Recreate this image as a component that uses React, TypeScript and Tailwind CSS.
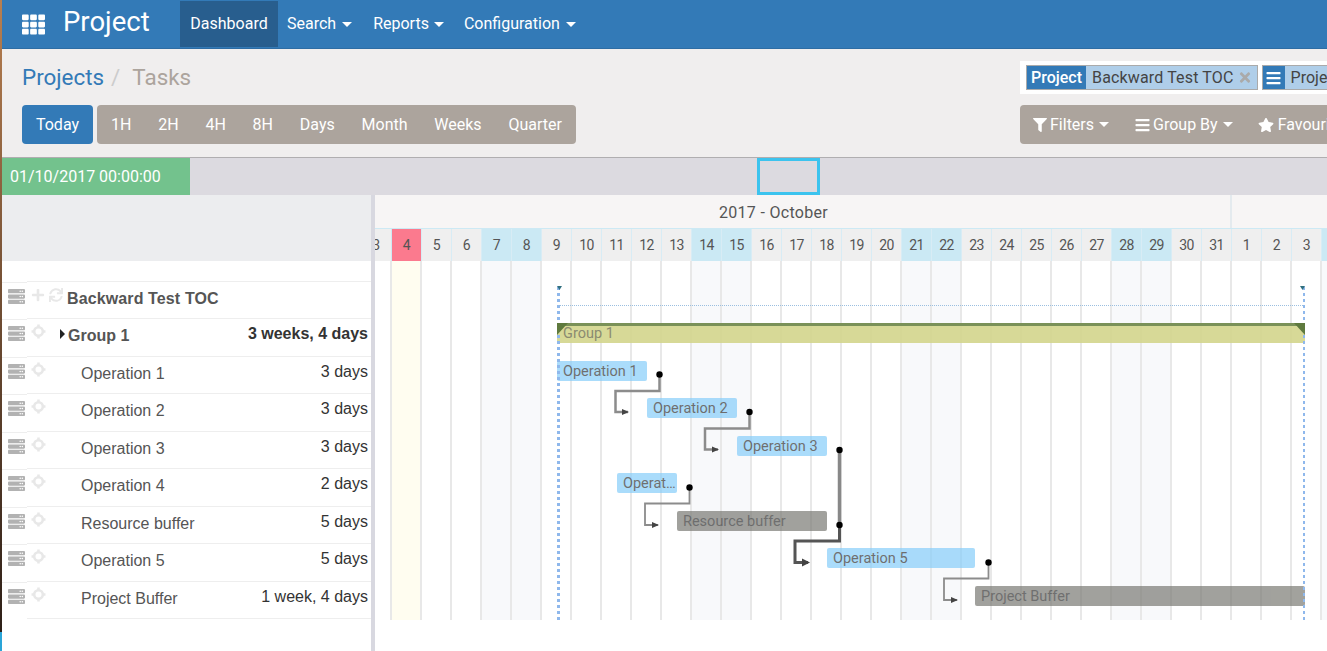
import { FaTh, FaFilter, FaBars, FaStar, FaTimes, FaServer, FaPlus, FaSync } from "react-icons/fa";

const Caret = () => (
  <span className="inline-block h-0 w-0 border-x-[5px] border-t-[5px] border-x-transparent border-t-white" />
);

// FA4-looking target icon used on every task row
const Target = () => (
  <svg viewBox="0 0 14 14" className="ml-[4px] mt-[5px] h-[15px] w-[15px] shrink-0 text-[#e8e8e8]" fill="none" stroke="currentColor">
    <circle cx="7" cy="7" r="4" strokeWidth="2.4" />
    <path d="M7 0.5V3.5M7 10.5V13.5M0.5 7H3.5M10.5 7H13.5" strokeWidth="2.4" />
  </svg>
);

const scales = ["1H", "2H", "4H", "8H", "Days", "Month", "Weeks", "Quarter"];

const days = [
  ...Array.from({ length: 28 }, (_, i) => i + 4),
  1, 2, 3,
  4,
];
const weekend = (i: number) => [3, 4, 10, 11, 17, 18, 24, 25, 31].includes(i);

const rows = [
  { name: "Backward Test TOC", time: "", kind: "root" },
  { name: "Group 1", time: "3 weeks, 4 days", kind: "group" },
  { name: "Operation 1", time: "3 days", kind: "op" },
  { name: "Operation 2", time: "3 days", kind: "op" },
  { name: "Operation 3", time: "3 days", kind: "op" },
  { name: "Operation 4", time: "2 days", kind: "op" },
  { name: "Resource buffer", time: "5 days", kind: "op" },
  { name: "Operation 5", time: "5 days", kind: "op" },
  { name: "Project Buffer", time: "1 week, 4 days", kind: "op" },
];

const bars = [
  { label: "Operation 1", cls: "left-[182px] top-[100px] w-[90px] bg-[#87cefa]" },
  { label: "Operation 2", cls: "left-[272px] top-[137px] w-[90px] bg-[#87cefa]" },
  { label: "Operation 3", cls: "left-[362px] top-[175px] w-[90px] bg-[#87cefa]" },
  { label: "Operat…", cls: "left-[242px] top-[212px] w-[60px] bg-[#87cefa]" },
  { label: "Resource buffer", cls: "left-[302px] top-[250px] w-[150px] bg-[#7a7a74]" },
  { label: "Operation 5", cls: "left-[452px] top-[287px] w-[148px] bg-[#87cefa]" },
  { label: "Project Buffer", cls: "left-[600px] top-[325px] w-[330px] bg-[#7a7a74]" },
];

const links = [
  { d: "M659.5 374 V391 H615.5 V412 H628", w: 2.5, c: "#8c8c8c", head: "622,409 629,412 622,415", dot: [659.5, 374.5] },
  { d: "M749.5 412 V428.5 H705 V449.5 H718", w: 2.5, c: "#8c8c8c", head: "712,446.5 719,449.5 712,452.5", dot: [749.5, 412] },
  { d: "M839.5 450 V525", w: 3.5, c: "#888888", head: "", dot: [839.5, 450] },
  { d: "M689.5 487.5 V503.5 H645 V525 H658", w: 1.8, c: "#8c8c8c", head: "652,522 659,525 652,528", dot: [689.5, 487.5] },
  { d: "M839.5 525 V541 H795 V562.5 H808", w: 3, c: "#555555", head: "802,558.5 810,562.5 802,566.5", dot: [839.5, 525] },
  { d: "M988.5 562.5 V578.5 H944 V600 H957", w: 1.8, c: "#8c8c8c", head: "951,597 958,600 951,603", dot: [988.5, 562.5] },
];

const App = () => {
  return (
    <div className="flex h-screen w-screen overflow-hidden bg-white font-['Roboto',sans-serif] text-[16px]">
      {/* window edge */}
      <div className="flex w-[2px] shrink-0 flex-col">
        <div className="h-[632px] bg-linear-to-b from-[#b87f50] to-[#2e2018]" />
        <div className="flex-1 bg-[#2aa5d8]" />
      </div>

      <div className="flex min-w-0 flex-1 flex-col">
        {/* Navbar */}
        <nav className="flex h-[49px] shrink-0 items-center border-b border-[#2e6da4] bg-[#337ab7] text-white">
          <FaTh className="ml-[20px] h-[23px] w-[23px]" />
          <span className="ml-[18px] w-[117px] pb-[4px] text-[27.5px] leading-none">Project</span>
          <a className="flex h-[46px] w-[98px] items-center justify-center bg-[#285e8e]">Dashboard</a>
          <a className="ml-[9px] flex items-center gap-[6px]">Search <Caret /></a>
          <a className="ml-[21px] flex items-center gap-[5px]">Reports <Caret /></a>
          <a className="ml-[20px] flex items-center gap-[6px]">Configuration <Caret /></a>
        </nav>

        {/* Control panel */}
        <div className="flex h-[109px] shrink-0 justify-between border-b border-[#b0aeb0] bg-[#f0eeee] pl-[20px]">
          <div>
            <div className="mt-[11px] flex h-[34px] items-center text-[22.4px] leading-none">
              <span className="text-[#337ab7]">Projects</span>
              <span className="ml-[7px] text-[#ccc]">/</span>
              <span className="ml-[12px] text-[#aca49d]">Tasks</span>
            </div>
            <div className="mt-[11px] flex h-[39px] gap-[4px] text-white">
              <button className="w-[71px] rounded-[4px] bg-[#337ab7]">Today</button>
              <div className="flex items-center gap-[26.8px] rounded-[4px] bg-[#aca49d] px-[14px]">
                {scales.map((s) => (
                  <span key={s}>{s}</span>
                ))}
              </div>
            </div>
          </div>

          <div className="w-[307px] overflow-hidden">
            <div className="mt-[12px] flex h-[33px] items-start gap-[4px] bg-white pl-[6px] pt-[4px]">
              <div className="flex h-[25px] shrink-0 border border-[#aaa]">
                <span className="flex items-center bg-[#337ab7] px-[4px] font-medium text-white">Project</span>
                <span className="flex items-center gap-[4px] whitespace-nowrap bg-[#afcee9] pl-[6px] pr-[5px] tracking-[0.15px] text-[#444]">
                  Backward Test TOC
                  <FaTimes className="h-[15px] w-[14px] shrink-0 text-[#aaa]" />
                </span>
              </div>
              <div className="flex h-[25px] shrink-0 border border-[#aaa]">
                <span className="flex w-[22px] items-center justify-center bg-[#337ab7] text-white">
                  <FaBars className="h-[16px] w-[15px]" />
                </span>
                <span className="flex items-center bg-[#afcee9] pl-[6px] pr-[20px] text-[#444]">Project</span>
              </div>
            </div>
            <div className="mt-[11px] flex h-[39px] items-center whitespace-nowrap rounded-l-[4px] bg-[#aca49d] pl-[13px] text-white">
              <FaFilter className="h-[14px] w-[14px] shrink-0" />
              <span className="ml-[3px]">Filters</span>
              <span className="ml-[5px] flex"><Caret /></span>
              <FaBars className="ml-[26px] h-[16px] w-[15px] shrink-0" />
              <span className="ml-[3px]">Group By</span>
              <span className="ml-[5px] flex"><Caret /></span>
              <FaStar className="ml-[25px] h-[16px] w-[16px] shrink-0" />
              <span className="ml-[4px]">Favourites</span>
            </div>
          </div>
        </div>

        {/* Timeline scrubber */}
        <div className="relative h-[37px] shrink-0 bg-[#dcdae0]">
          <div className="flex h-full w-[188px] items-center bg-[#73c28d] pl-[8px] text-white">01/10/2017 00:00:00</div>
          <div className="absolute left-[755px] top-0 h-full w-[63px] border-[3px] border-[#3cc3ee]" />
        </div>

        {/* Gantt */}
        <div className="flex min-h-0 flex-1">
          {/* Task list */}
          <div className="w-[369px] shrink-0 font-['Liberation_Sans',sans-serif] text-[16px] text-[#555]">
            <div className="h-[66px] bg-[#ecedef]" />
            <div className="h-[19.75px]" />
            {rows.map((r) => (
              <div key={r.name} className="flex h-[37.5px]">
                <div className="mt-[1px] w-[25px] border-t border-[#eee] pl-[6px] pt-[5px]">
                  <FaServer className="h-[17px] w-[17px] text-[#b2b2b2]" />
                </div>
                <div className="flex flex-1 items-start border-t border-[#eee]">
                  {r.kind === "root" ? (
                    <FaPlus className="ml-[4px] mt-[6px] h-[14px] w-[14px] text-[#e8e8e8]" />
                  ) : (
                    <Target />
                  )}
                  {r.kind === "root" && (
                    <>
                      <FaSync className="ml-[4px] mt-[6px] h-[14px] w-[14px] text-[#e8e8e8]" />
                      <span className="ml-[4px] mt-[5px] font-bold tracking-[0.12px]">{r.name}</span>
                    </>
                  )}
                  {r.kind === "group" && (
                    <>
                      <span className="ml-[14px] mt-[10px] h-0 w-0 border-y-[5px] border-l-[5px] border-y-transparent border-l-[#222]" />
                      <span className="ml-[3px] mt-[5px] font-bold">{r.name}</span>
                      <span className="ml-auto mr-[3px] mt-[3px] font-bold text-[#333]">{r.time}</span>
                    </>
                  )}
                  {r.kind === "op" && (
                    <>
                      <span className="ml-[35px] mt-[5px]">{r.name}</span>
                      <span className="ml-auto mr-[3px] mt-[3px] text-[#333]">{r.time}</span>
                    </>
                  )}
                </div>
              </div>
            ))}
            <div className="ml-[25px] border-t border-[#eee]" />
          </div>

          <div className="w-[4px] shrink-0 bg-[#d8d8e0]" />

          {/* Chart */}
          <div className="min-w-0 flex-1 overflow-hidden text-[#555]">
            <div className="flex h-[33px] bg-[#f7f5f5]">
              <div className="flex w-[857px] shrink-0 items-center justify-center border-r-2 border-[#e4eaee] pr-[58px] pt-[2px] tracking-[0.3px]">
                2017 - October
              </div>
            </div>
            <div className="flex h-[33px] border-t border-[#cde9f4] text-[14px] tracking-[-0.5px]">
              <div className="flex w-[17px] shrink-0 items-center justify-end overflow-hidden border-r border-[#cde9f4] bg-[#efefef]">
                <span className="w-[30px] shrink-0 text-center">3</span>
              </div>
              {days.map((d, i) => (
                <div
                  key={i}
                  className={`flex w-[30px] shrink-0 items-center justify-center border-r border-[#d8ecf5] ${
                    i === 0 ? "bg-[#fb7a8e]" : weekend(i) ? "bg-[#cbe9f4]" : "bg-[#efefef]"
                  }`}
                >
                  {d}
                </div>
              ))}
            </div>

            <div className="relative h-[359px]">
              <div className="flex h-full">
                <div className="w-[17px] shrink-0 border-r-2 border-[#e8e8e8]" />
                {days.map((_, i) => (
                  <div
                    key={i}
                    className={`w-[30px] shrink-0 border-r-2 border-[#e8e8e8] ${
                      i === 0 ? "bg-[#fffdf0]" : weekend(i) ? "bg-[#f8f9fb]" : ""
                    }`}
                  />
                ))}
              </div>

              {/* Bars */}
              <div className="absolute left-[182px] top-[62px] h-[20px] w-[748px] border-t-[3px] border-[#7a9158] bg-[#d3d58c]/90 pl-[6px] text-[14.5px] leading-[15px] text-[#8b8b70]">
                Group 1
              </div>
              {bars.map((b) => (
                <div
                  key={b.label}
                  className={`absolute flex h-[20px] items-center overflow-hidden rounded-[2px] pl-[6px] pt-[1px] text-[14.5px] text-[#333] opacity-70 ${b.cls}`}
                >
                  {b.label}
                </div>
              ))}

              <svg className="absolute left-0 top-0 h-full w-full" fill="none">
                <g transform="translate(-375 -261)">
                  <line x1="558.5" y1="287" x2="558.5" y2="620" stroke="#8fb8ec" strokeWidth="3" strokeDasharray="3 3" />
                  <line x1="1304" y1="287" x2="1304" y2="620" stroke="#8fb8ec" strokeWidth="2" strokeDasharray="3 3" />
                  <line x1="558" y1="305.5" x2="1303" y2="305.5" stroke="#9bbfe0" strokeDasharray="1 1" />
                  <polygon points="557,286 562,286 559.5,290" fill="#2f6f7f" />
                  <polygon points="1300,286 1305,286 1302.5,290" fill="#2f6f7f" />
                  <polygon points="557,323 568,323 557,335" fill="#5f7a3e" />
                  <polygon points="1305,323 1294,323 1305,335" fill="#5f7a3e" />
                  {links.map((l) => (
                    <g key={l.d}>
                      <path d={l.d} stroke={l.c} strokeWidth={l.w} />
                      {l.head && <polygon points={l.head} fill="#444" />}
                      <circle cx={l.dot[0]} cy={l.dot[1]} r="3.2" fill="#000" />
                    </g>
                  ))}
                </g>
              </svg>
            </div>
          </div>
        </div>
      </div>
    </div>
  );
};

export default App;
